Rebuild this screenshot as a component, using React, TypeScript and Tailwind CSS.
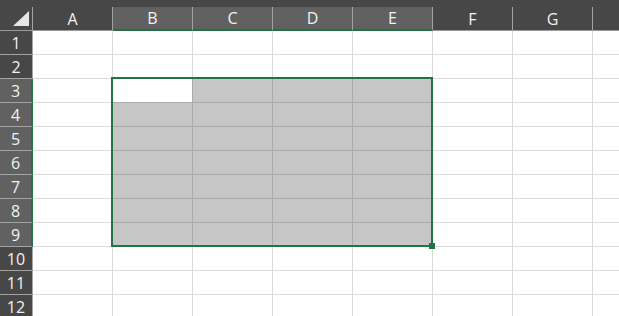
import React from "react";

const COLS = ["A", "B", "C", "D", "E", "F", "G", ""];
const ROWS = [1, 2, 3, 4, 5, 6, 7, 8, 9, 10, 11, 12];

const selCol = (c: number) => c >= 1 && c <= 4;
const selRow = (r: number) => r >= 3 && r <= 9;

export default function App() {
  return (
    <div
      className="relative h-[316px] w-[619px] overflow-hidden bg-white"
      style={{ fontFamily: '"Open Sans", "Noto Sans", sans-serif' }}
    >
      {/* header row */}
      <div className="flex h-[31px] bg-[#474747] pt-[7px]">
        <div className="relative h-[24px] w-[33px] shrink-0 border-r border-b border-r-[#a3a3a3] border-b-[#9b9b9b]">
          <svg
            className="absolute left-[13px] top-[4px]"
            width="16"
            height="15"
            viewBox="0 0 16 15"
          >
            <polygon points="16,0 16,15 0,15" fill="#e6e6e6" />
          </svg>
        </div>
        {COLS.map((c, i) => (
          <div
            key={i}
            className={
              "flex h-[24px] w-[80px] shrink-0 items-center justify-center border-r border-r-[#a3a3a3] text-[16px] text-[#f2f2f2] " +
              (selCol(i)
                ? "border-b-2 border-b-[#217346] bg-[#616161]"
                : "border-b border-b-[#9b9b9b]")
            }
          >
            {c}
          </div>
        ))}
      </div>

      {/* body rows */}
      {ROWS.map((r) => (
        <div key={r} className="flex h-[24px]">
          <div
            className={
              "flex h-[24px] w-[33px] shrink-0 items-center justify-center border-b border-b-[#a3a3a3] text-[16px] text-[#f2f2f2] " +
              (selRow(r)
                ? "border-r-2 border-r-[#217346] bg-[#616161]"
                : "border-r border-r-[#a3a3a3] bg-[#474747]")
            }
          >
            {r}
          </div>
          {COLS.map((_, i) => {
            const inSel = selRow(r) && selCol(i);
            const active = r === 3 && i === 1;
            return (
              <div
                key={i}
                className={
                  "h-[24px] w-[80px] shrink-0 border-r border-b " +
                  (inSel
                    ? active
                      ? "border-[#ababab] bg-white"
                      : "border-[#ababab] bg-[#c6c6c6]"
                    : "border-[#dadada] bg-white")
                }
              />
            );
          })}
        </div>
      ))}

      {/* selection outline */}
      <div className="pointer-events-none absolute left-[111px] top-[77px] h-[170px] w-[322px] border-2 border-[#217346]" />
      <div className="absolute left-[429px] top-[243px] h-[6px] w-[6px] bg-[#217346]" />
    </div>
  );
}
